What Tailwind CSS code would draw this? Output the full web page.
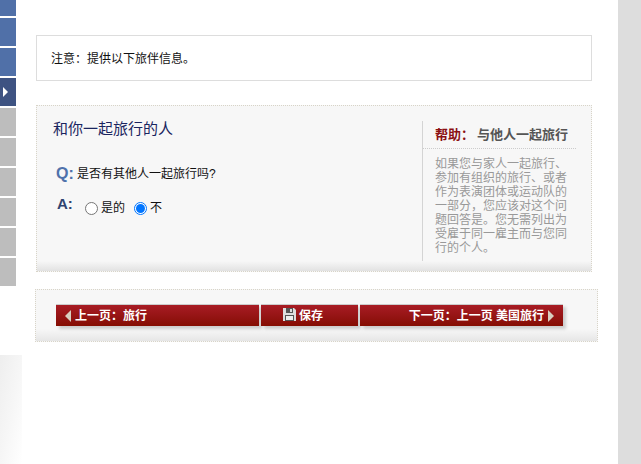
<!DOCTYPE html>
<html lang="zh-CN">
<head>
    <meta charset="UTF-8">
    <title>和你一起旅行的人</title>
    <script src="https://cdn.jsdelivr.net/npm/@tailwindcss/browser@4"></script>
</head>
<body class="bg-white overflow-hidden">
<div class="flex w-[641px] h-[464px] overflow-hidden font-['Liberation_Sans','Noto_Sans_CJK_SC',sans-serif] text-[12px]">

    <!-- left menu tiles -->
    <div class="w-[36px] shrink-0 flex flex-col">
        <div class="w-[16px] flex flex-col gap-[2px]">
            <div class="h-[16px] bg-[#5070a8]"></div>
            <div class="h-[28px] bg-[#5070a8]"></div>
            <div class="h-[28px] bg-[#5070a8]"></div>
            <div class="h-[28px] bg-[#3e5382] flex items-center pl-[3px]">
                <div class="w-0 h-0 border-y-[5px] border-y-transparent border-l-[5px] border-l-white"></div>
            </div>
            <div class="h-[28px] bg-[#bdbdbd]"></div>
            <div class="h-[28px] bg-[#bdbdbd]"></div>
            <div class="h-[28px] bg-[#bdbdbd]"></div>
            <div class="h-[28px] bg-[#bdbdbd]"></div>
            <div class="h-[28px] bg-[#bdbdbd]"></div>
            <div class="h-[28px] bg-[#bdbdbd]"></div>
        </div>
        <div class="mt-[69px] w-[22px] h-[109px] bg-linear-to-br from-[#eeeeee] via-[#f6f6f6] to-white"></div>
    </div>

    <!-- main column -->
    <div class="w-[582px] shrink-0 pt-[35px]">
        <div class="w-[556px] h-[46px] border border-[#dddddd] flex items-center pl-[14px] pt-[1px] text-[#111]">注意：提供以下旅伴信息。</div>

        <div class="relative w-[556px] h-[167px] mt-[24px] border border-dotted border-[#d8d4c8] bg-[#f7f7f7] flex">
            <div class="absolute left-0 right-0 bottom-0 h-[10px] bg-linear-to-b from-[#f7f7f7] to-[#e2e2e2]"></div>
            <div class="w-[385px] pl-[15px] pt-[14px] relative">
                <div class="text-[15px] leading-[18px] text-[#1a2560] pl-[1px]">和你一起旅行的人</div>
                <div class="flex items-center mt-[26px] pl-[4px] h-[20px]">
                    <span class="text-[16px] font-bold text-[#4f72ab] w-[21px]">Q:</span>
                    <span class="text-[#111]">是否有其他人一起旅行吗?</span>
                </div>
                <div class="flex items-start mt-[11px] pl-[5px]">
                    <span class="text-[15px] leading-[18px] font-bold text-[#2f4370] w-[28px]">A:</span>
                    <label class="flex items-center mt-[4px] text-[#111]">
                        <span class="w-[13px] h-[13px] rounded-full border border-[#767676] bg-white mr-[3px]"></span>是的
                    </label>
                    <label class="flex items-center mt-[4px] ml-[9px] text-[#111]">
                        <span class="w-[13px] h-[13px] rounded-full border border-[#0075ff] bg-white flex items-center justify-center mr-[3px]">
                            <span class="w-[9px] h-[9px] rounded-full bg-[#0075ff]"></span>
                        </span>不
                    </label>
                </div>
            </div>
            <div class="relative w-[154px] h-[140px] mt-[15px] border-l border-[#d4d4d4]">
                <div class="h-[28px] border-b border-dotted border-[#ccc] pl-[12px] pt-[6px] text-[13px] font-bold leading-[16px] text-[#555]"><span class="text-[#8b0f12] mr-[3px]">帮助：</span>与他人一起旅行</div>
                <div class="pl-[12px] pt-[8px] w-[145px] leading-[14px] text-[#999]">如果您与家人一起旅行、参加有组织的旅行、或者作为表演团体或运动队的一部分，您应该对这个问题回答是。您无需列出为受雇于同一雇主而与您同行的个人。</div>
            </div>
        </div>

        <div class="relative w-[563px] h-[53px] -ml-px mt-[17px] border border-dotted border-[#d8d4c8] bg-[#f7f7f7] flex gap-[2px] pl-[20px] pt-[14px]">
            <div class="absolute left-0 right-0 bottom-0 h-[12px] bg-linear-to-b from-[#f7f7f7] to-[#e6e6e6]"></div>
            <div class="relative w-[203px] h-[22px] flex items-center pl-[9px] font-bold text-white bg-linear-to-b from-[#a81c24] to-[#850d02] border-t border-[#ccc] shadow-[3px_3px_3px_#ccc]">
                <span class="w-0 h-0 border-y-[6px] border-y-transparent border-r-[6px] border-r-[#d8cfc0] mr-[4px]"></span>上一页：旅行
            </div>
            <div class="relative w-[97px] h-[22px] flex items-center pl-[22px] font-bold text-white bg-linear-to-b from-[#a81c24] to-[#850d02] border-t border-[#ccc] shadow-[3px_3px_3px_#ccc]">
                <svg class="w-[13px] h-[13px] mr-[3px] mb-[2px]" viewBox="0 0 13 13"><path fill="#ddd" d="M0 0h11l2 2v11H0z"/><path fill="#555" d="M3 0h7v5H3z"/><path fill="#ddd" d="M7 1h2v3H7z"/><path fill="#555" d="M2 7h9v6H2z"/><path fill="#eee" d="M3 8h7v4H3z"/></svg>保存
            </div>
            <div class="relative w-[203px] h-[22px] flex items-center justify-end pr-[9px] font-bold text-white bg-linear-to-b from-[#a81c24] to-[#850d02] border-t border-[#ccc] shadow-[3px_3px_3px_#ccc]">
                下一页：上一页 美国旅行<span class="w-0 h-0 border-y-[6px] border-y-transparent border-l-[6px] border-l-[#d8cfc0] ml-[4px]"></span>
            </div>
        </div>
    </div>

    <!-- right gutter -->
    <div class="w-[23px] shrink-0 bg-[#dddddd]"></div>
</div>
</body>
</html>
